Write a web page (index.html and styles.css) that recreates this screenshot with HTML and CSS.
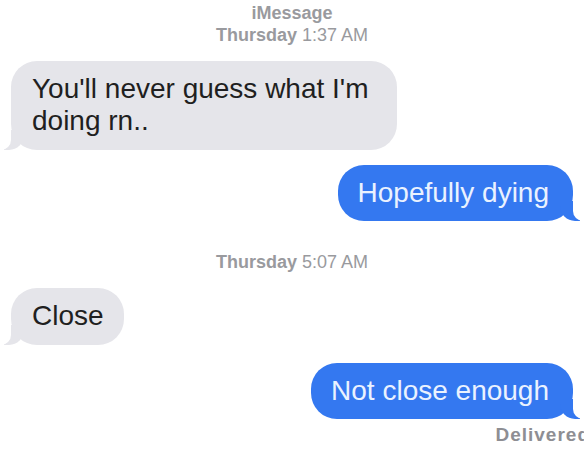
FILE: index.html
```html
<!DOCTYPE html>
<html lang="en">
<head>
    <meta charset="UTF-8">
    <meta name="viewport" content="width=device-width, initial-scale=1.0">
    <title>iMessage</title>
    <link rel="stylesheet" href="styles.css">
</head>
<body>
    <div class="thread">
        <div class="stamp">
            <div class="stamp-title">iMessage</div>
            <div><b>Thursday</b> 1:37 AM</div>
        </div>

        <div class="row row-in first">
            <div class="bubble in">You'll never guess what I'm doing rn..</div>
        </div>

        <div class="row row-out">
            <div class="bubble out">Hopefully dying</div>
        </div>

        <div class="stamp stamp-mid">
            <div><b>Thursday</b> 5:07 AM</div>
        </div>

        <div class="row row-in">
            <div class="bubble in">Close</div>
        </div>

        <div class="row row-out last">
            <div class="bubble out">Not close enough</div>
        </div>

        <div class="status">Delivered</div>
    </div>
</body>
</html>
```

FILE: styles.css
```css
* {
    margin: 0;
    padding: 0;
    box-sizing: border-box;
}

body {
    font-family: 'Liberation Sans', Arial, sans-serif;
    background-color: #fff;
    color: #1f1f21;
    overflow: hidden;
}

.thread {
    display: flex;
    flex-direction: column;
    padding: 2px 11px 0 11px;
}

.stamp {
    text-align: center;
    color: #999a9e;
    font-size: 18px;
    line-height: 22px;
}

.stamp b,
.stamp-title {
    font-weight: 700;
}

.stamp-mid {
    margin-top: 30px;
}

.row {
    display: flex;
    margin-top: 15px;
}

.row.first {
    margin-top: 15px;
}

.row.last {
    margin-top: 18px;
}

.row-in {
    justify-content: flex-start;
}

.row-out {
    justify-content: flex-end;
}

.bubble {
    position: relative;
    font-size: 28px;
    line-height: 32px;
    border-radius: 26px;
    max-width: 386px;
}

.bubble.in {
    background: #e5e5ea;
    color: #1f1f21;
    padding: 12px 20px 13px 21px;
}

.bubble.out {
    background: #3478f0;
    color: #eaf2ff;
    padding: 12px 24px 12px 20px;
}

/* tails */
.bubble::before,
.bubble::after {
    content: "";
    position: absolute;
    bottom: 0;
    height: 20px;
}

.bubble.in::before {
    left: -7px;
    width: 20px;
    background: #e5e5ea;
    border-bottom-right-radius: 15px;
}

.bubble.in::after {
    left: -10px;
    width: 10px;
    background: #fff;
    border-bottom-right-radius: 10px;
}

.bubble.out::before {
    right: -7px;
    width: 20px;
    background: #3478f0;
    border-bottom-left-radius: 15px;
}

.bubble.out::after {
    right: -10px;
    width: 10px;
    background: #fff;
    border-bottom-left-radius: 10px;
}

.status {
    align-self: flex-end;
    margin-top: 5px;
    margin-right: -17px;
    font-size: 19px;
    line-height: 22px;
    font-weight: 700;
    letter-spacing: 1px;
    color: #8e8e93;
}
```
